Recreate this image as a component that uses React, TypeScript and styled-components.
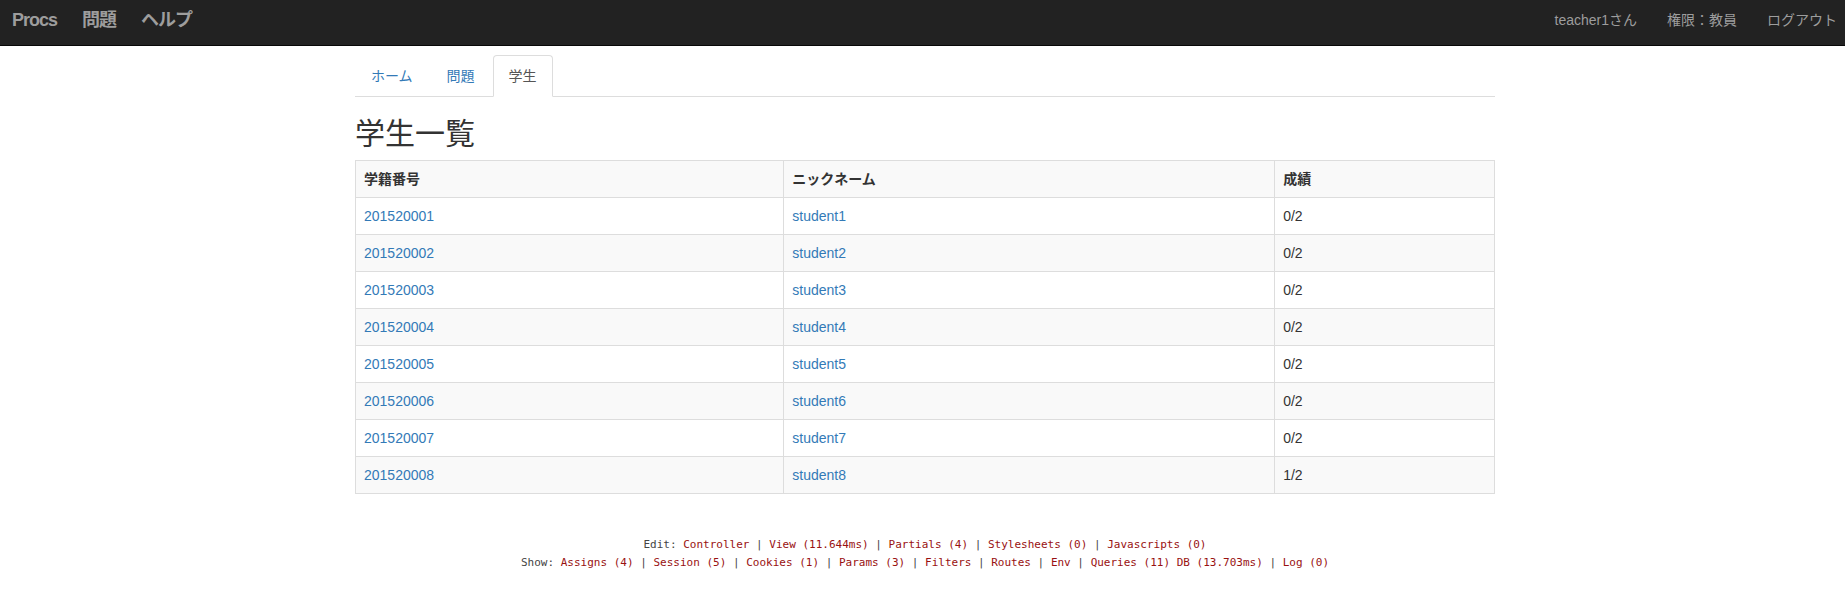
import React from "react";
import styled, { createGlobalStyle } from "styled-components";

const Global = createGlobalStyle`
  * { box-sizing: border-box; }
  body {
    margin: 0;
    background: #fff;
    color: #333;
    font: 14px/20px "Liberation Sans", "Noto Sans CJK JP", sans-serif;
  }
  a { color: #337ab7; text-decoration: none; }
`;

const Navbar = styled.nav`
  display: flex;
  justify-content: space-between;
  min-height: 46px;
  padding: 0 8px 0 12px;
  background: #222;
  border-bottom: 1px solid #080808;
`;

const NavGroup = styled.div<{ $gap: number }>`
  display: flex;
  gap: ${(p) => p.$gap}px;
  padding-top: 10px;
`;

const Brand = styled.a`
  color: #9d9d9d;
  font-size: 18px;
  font-weight: bold;
  letter-spacing: -1px;
`;

const NavLink = styled.a`
  color: #9d9d9d;
`;

const NavText = styled.span`
  color: #9d9d9d;
`;

const Page = styled.div`
  padding: 9px 0 0 5px;
`;

const Container = styled.main`
  max-width: 1140px;
  margin: 0 auto;
`;

const Tabs = styled.nav`
  display: flex;
  gap: 2px;
  border-bottom: 1px solid #ddd;
`;

const Tab = styled.a<{ $active?: boolean }>`
  padding: 10px 15px;
  margin-bottom: -1px;
  border: 1px solid;
  border-color: ${(p) => (p.$active ? "#ddd #ddd #fff" : "transparent")};
  border-radius: 4px 4px 0 0;
  && { color: ${(p) => (p.$active ? "#555" : "#337ab7")}; }
`;

const Title = styled.h1`
  margin: 20px 0 10px;
  font-size: 30px;
  line-height: 33px;
  font-weight: 400;
`;

const Table = styled.table`
  width: 100%;
  table-layout: fixed;
  border-collapse: collapse;
`;

const Row = styled.tr``;

const Head = styled.thead`
  background: #f9f9f9;
`;

const Body = styled.tbody`
  ${Row}:nth-child(even) { background: #f9f9f9; }
`;

const HeadCell = styled.th<{ $width?: string }>`
  width: ${(p) => p.$width ?? "auto"};
  padding: 8px;
  border: 1px solid #ddd;
  text-align: left;
`;

const Cell = styled.td`
  padding: 8px;
  border: 1px solid #ddd;
`;

const Footnotes = styled.footer`
  margin: 42px 0;
  color: #444;
  font: 11px/18px "DejaVu Sans Mono", monospace;
  text-align: center;
  a { color: #911; }
`;

const students = ["0/2", "0/2", "0/2", "0/2", "0/2", "0/2", "0/2", "1/2"].map((score, i) => ({
  id: `20152000${i + 1}`,
  name: `student${i + 1}`,
  score,
}));

const editLinks = ["Controller", "View (11.644ms)", "Partials (4)", "Stylesheets (0)", "Javascripts (0)"];
const showLinks = ["Assigns (4)", "Session (5)", "Cookies (1)", "Params (3)", "Filters", "Routes", "Env", "Queries (11) DB (13.703ms)", "Log (0)"];

function NoteLine({ label, items }: { label: string; items: string[] }) {
  return (
    <div>
      {label}:{" "}
      {items.map((item, i) => (
        <React.Fragment key={item}>
          {i > 0 && " | "}
          <a href="#">{item}</a>
        </React.Fragment>
      ))}
    </div>
  );
}

export default function App() {
  return (
    <>
      <Global />
      <Navbar>
        <NavGroup $gap={25}>
          <Brand href="#">Procs</Brand>
          <Brand href="#">問題</Brand>
          <Brand href="#">ヘルプ</Brand>
        </NavGroup>
        <NavGroup $gap={30}>
          <NavText>teacher1さん</NavText>
          <NavText>権限：教員</NavText>
          <NavLink href="#">ログアウト</NavLink>
        </NavGroup>
      </Navbar>
      <Page>
        <Container>
          <Tabs>
            <Tab href="#">ホーム</Tab>
            <Tab href="#">問題</Tab>
            <Tab href="#" $active>学生</Tab>
          </Tabs>
          <Title>学生一覧</Title>
          <Table>
            <Head>
              <Row>
                <HeadCell scope="col" $width="37.6%">学籍番号</HeadCell>
                <HeadCell scope="col" $width="43.1%">ニックネーム</HeadCell>
                <HeadCell scope="col">成績</HeadCell>
              </Row>
            </Head>
            <Body>
              {students.map((s) => (
                <Row key={s.id}>
                  <Cell><a href="#">{s.id}</a></Cell>
                  <Cell><a href="#">{s.name}</a></Cell>
                  <Cell>{s.score}</Cell>
                </Row>
              ))}
            </Body>
          </Table>
          <Footnotes>
            <NoteLine label="Edit" items={editLinks} />
            <NoteLine label="Show" items={showLinks} />
          </Footnotes>
        </Container>
      </Page>
    </>
  );
}
